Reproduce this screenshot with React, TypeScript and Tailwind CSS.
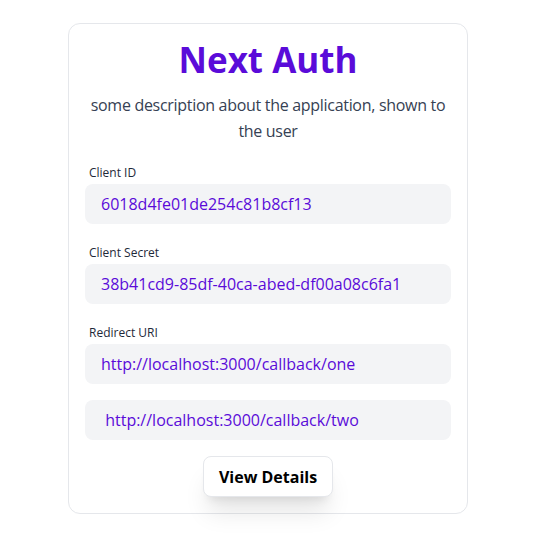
const fields = [
  { label: "Client ID", values: ["6018d4fe01de254c81b8cf13"] },
  { label: "Client Secret", values: ["38b41cd9-85df-40ca-abed-df00a08c6fa1"] },
  {
    label: "Redirect URI",
    values: ["http://localhost:3000/callback/one", " http://localhost:3000/callback/two"],
  },
];

export default function App() {
  return (
    <div className="min-h-screen bg-white pt-[23px] font-['Open_Sans',sans-serif]">
      <div className="mx-auto w-[400px] translate-x-px rounded-xl border border-gray-200 bg-white px-4 pt-[14px] pb-4">
        <h1 className="text-center text-[35px] leading-[44px] font-bold text-[#5a0bd9]">Next Auth</h1>
        <p className="mt-[10px] text-center text-base leading-[26px] tracking-[-0.3px] text-gray-700">
          some description about the application, shown to the user
        </p>

        <div className="mt-[21px] flex flex-col gap-[21px]">
          {fields.map((f) => (
            <div key={f.label}>
              <p className="mb-[3px] pl-1 text-xs leading-4 text-gray-800">{f.label}</p>
              <div className="flex flex-col gap-4">
                {f.values.map((v) => (
                  <div
                    key={v}
                    className="flex h-10 items-center rounded-lg bg-gray-100 px-4 text-base whitespace-pre text-[#5a0bd9]"
                  >
                    {v}
                  </div>
                ))}
              </div>
            </div>
          ))}
        </div>

        <div className="mt-4 flex justify-center">
          <button className="h-[41px] w-[130px] rounded-lg border border-gray-200 bg-white text-base font-bold text-black shadow-xl">
            View Details
          </button>
        </div>
      </div>
    </div>
  );
}
